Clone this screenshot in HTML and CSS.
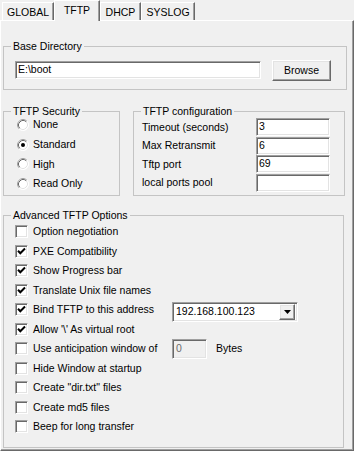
FILE: index.html
```
<!DOCTYPE html>
<html>
<head>
<meta charset="utf-8">
<title>TFTP settings</title>
<link rel="stylesheet" href="styles.css">
</head>
<body>
<svg class="defs" width="0" height="0">
  <symbol id="radio" viewBox="0 0 12 12">
    <circle cx="6" cy="6" r="5.5" fill="#fff" stroke="#fff"/>
    <path d="M2.11 9.89 A5.5 5.5 0 0 1 9.89 2.11" stroke="#a0a0a0" fill="none"/>
    <path d="M2.82 9.18 A4.5 4.5 0 0 1 9.18 2.82" stroke="#696969" fill="none"/>
    <path d="M9.18 2.82 A4.5 4.5 0 0 1 2.82 9.18" stroke="#e3e3e3" fill="none"/>
  </symbol>
  <symbol id="tick" viewBox="0 0 9 9">
    <polyline points="1,3.8 3.3,6.2 8,1.5" fill="none" stroke="#000" stroke-width="2"/>
  </symbol>
</svg>

<div class="tabs">
  <div class="tab t-global">GLOBAL</div>
  <div class="tab t-tftp active">TFTP</div>
  <div class="tab t-dhcp">DHCP</div>
  <div class="tab t-syslog">SYSLOG</div>
</div>

<div class="page">
  <fieldset class="base">
    <legend>Base Directory</legend>
    <div class="dir-row">
      <div class="field path">E:\boot</div>
      <div class="button">Browse</div>
    </div>
  </fieldset>

  <div class="middle">
    <fieldset class="security">
      <legend>TFTP Security</legend>
      <div class="radios">
        <div class="radio"><svg class="rb"><use href="#radio"/></svg>None</div>
        <div class="radio"><svg class="rb"><use href="#radio"/><circle cx="6" cy="6" r="2" fill="#000"/></svg>Standard</div>
        <div class="radio"><svg class="rb"><use href="#radio"/></svg>High</div>
        <div class="radio"><svg class="rb"><use href="#radio"/></svg>Read Only</div>
      </div>
    </fieldset>

    <fieldset class="config">
      <legend>TFTP configuration</legend>
      <div class="config-grid">
        <span>Timeout (seconds)</span><div class="field num">3</div>
        <span>Max Retransmit</span><div class="field num">6</div>
        <span>Tftp port</span><div class="field num">69</div>
        <span>local ports pool</span><div class="field num"></div>
      </div>
    </fieldset>
  </div>

  <fieldset class="advanced">
    <legend>Advanced TFTP Options</legend>
    <div class="opt"><span class="box"></span>Option negotiation</div>
    <div class="opt"><span class="box"><svg class="tk"><use href="#tick"/></svg></span>PXE Compatibility</div>
    <div class="opt"><span class="box"><svg class="tk"><use href="#tick"/></svg></span>Show Progress bar</div>
    <div class="opt"><span class="box"><svg class="tk"><use href="#tick"/></svg></span>Translate Unix file names</div>
    <div class="opt">
      <span class="box"><svg class="tk"><use href="#tick"/></svg></span>
      <span class="wide">Bind TFTP to this address</span>
      <div class="field combo"><span class="combo-text">192.168.100.123</span><span class="drop"><svg width="7" height="4"><polygon points="0,0 7,0 3.5,4" fill="#000"/></svg></span></div>
    </div>
    <div class="opt"><span class="box"><svg class="tk"><use href="#tick"/></svg></span>Allow '\' As virtual root</div>
    <div class="opt">
      <span class="box"></span>
      <span class="wide">Use anticipation window of</span>
      <div class="field spin">0</div>
      <span class="unit">Bytes</span>
    </div>
    <div class="opt"><span class="box"></span>Hide Window at startup</div>
    <div class="opt"><span class="box"></span>Create "dir.txt" files</div>
    <div class="opt"><span class="box"></span>Create md5 files</div>
    <div class="opt"><span class="box"></span>Beep for long transfer</div>
  </fieldset>
</div>
</body>
</html>
```
FILE: styles.css
```
*{box-sizing: border-box;}
body
{
	margin: 0;
	width: 354px;
	height: 451px;
	overflow: hidden;
	background: #f0f0f0;
	color: #000;
	font: 10.5px/13px "Liberation Sans", Arial, sans-serif;
}
.defs{position: absolute;}

/* tab strip */
.tabs
{
	display: flex;
	align-items: flex-start;
	height: 20px;
	padding-left: 2px;
}
.tab
{
	height: 18px;
	margin-top: 2px;
	padding-top: 3px;
	text-align: center;
	border-top: 1px solid #fff;
	border-left: 1px solid #fff;
	border-right: 1px solid #696969;
	box-shadow: inset -1px 0 0 #a0a0a0;
	background: #f0f0f0;
}
.tab.active
{
	height: 21px;
	margin-top: 0;
	position: relative;
	z-index: 1;
}
.t-global{width: 52px;}
.t-tftp{width: 46px;}
.t-dhcp{width: 41px;}
.t-syslog{width: 54px;}

/* tab page */
.page
{
	height: 431px;
	padding-left: 2px;
	border: 1px solid;
	border-color: #fff #696969 #696969 #fff;
	box-shadow: inset -1px -1px 0 #a0a0a0;
}
fieldset
{
	margin: 0;
	padding: 0;
	border: 1px solid #c4c4c4;
}
legend
{
	margin-left: 7px;
	padding: 0 2px;
	line-height: 13px;
}

/* sunken edit */
.field
{
	background: #fff;
	border: 1px solid;
	border-color: #a0a0a0 #fff #fff #a0a0a0;
	box-shadow: inset 1px 1px 0 #696969, inset -1px -1px 0 #e3e3e3;
	padding-left: 2px;
	white-space: nowrap;
}
.button
{
	display: flex;
	align-items: center;
	justify-content: center;
	border: 1px solid;
	border-color: #fff #696969 #696969 #fff;
	box-shadow: inset -1px -1px 0 #a0a0a0, inset 1px 1px 0 #e3e3e3;
}

.base
{
	width: 344px;
	margin-top: 19px;
	padding: 7px 0 8px 0;
}
.dir-row
{
	display: flex;
	align-items: flex-start;
	padding-left: 11px;
}
.path
{
	width: 246px;
	height: 18px;
	margin-top: 1px;
	line-height: 15px;
}
.button{width: 59px; height: 21px; margin-left: 11px;}

.middle
{
	display: flex;
	gap: 13px;
	margin-top: 15px;
}
.security{width: 117px; height: 91px;}
.radios{margin-top: -3px;}
.radio
{
	display: flex;
	align-items: center;
	height: 19.7px;
	padding-left: 13px;
}
.rb{width: 12px; height: 12px; margin-right: 4px;}

.config{width: 212px; height: 91px;}
.config-grid
{
	display: grid;
	grid-template-columns: 114px 74px;
	grid-auto-rows: 18.5px;
	align-items: center;
	padding-left: 8px;
}
.num
{
	height: 18px;
	align-self: start;
	line-height: 15px;
}

.advanced
{
	width: 341px;
	height: 239px;
	margin-top: 13px;
}
.opt
{
	display: flex;
	align-items: center;
	height: 19.5px;
	padding-left: 11px;
	white-space: nowrap;
}
.box
{
	display: flex;
	align-items: center;
	justify-content: center;
	width: 13px;
	height: 13px;
	margin-right: 5px;
	background: #fff;
	border: 1px solid;
	border-color: #a0a0a0 #fff #fff #a0a0a0;
	box-shadow: inset 1px 1px 0 #696969, inset -1px -1px 0 #e3e3e3;
}
.tk{width: 9px; height: 9px;}
.wide{width: 139px;}
.combo
{
	display: flex;
	align-items: center;
	justify-content: space-between;
	width: 126px;
	height: 20px;
	padding-right: 2px;
	margin-top: 4px;
}
.combo-text{padding-left: 1px;}
.drop
{
	display: flex;
	align-items: center;
	justify-content: center;
	width: 16px;
	height: 16px;
	background: #f0f0f0;
	border: 1px solid;
	border-color: #fff #696969 #696969 #fff;
	box-shadow: inset -1px -1px 0 #a0a0a0, inset 1px 1px 0 #e3e3e3;
}
.spin
{
	width: 35px;
	height: 20px;
	line-height: 17px;
	padding-left: 3px;
	background: #f0f0f0;
	color: #6d6d6d;
}
.unit{margin-left: 9px;}
```
